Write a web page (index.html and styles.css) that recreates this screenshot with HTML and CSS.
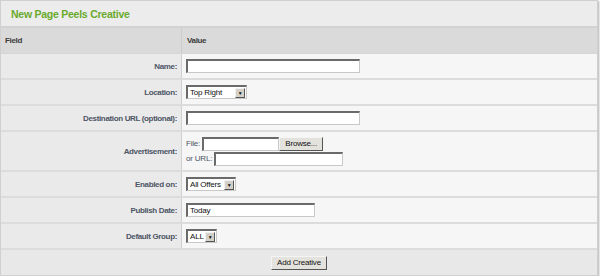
FILE: index.html
```html
<!DOCTYPE html>
<html lang="en">
<head>
    <meta charset="UTF-8">
    <title>New Page Peels Creative</title>
    <link rel="stylesheet" href="styles.css">
</head>
<body>
    <div class="panel">
        <div class="panel-title">New Page Peels Creative</div>
        <table class="form-table">
            <tr class="head">
                <th class="col-field">Field</th>
                <th class="col-value">Value</th>
            </tr>
            <tr>
                <td class="label">Name:</td>
                <td class="value"><input type="text" class="text w-wide"></td>
            </tr>
            <tr>
                <td class="label">Location:</td>
                <td class="value">
                    <span class="select w-loc"><span class="select-text">Top Right</span><span class="arrow">&#9660;</span></span>
                </td>
            </tr>
            <tr>
                <td class="label">Destination URL (optional):</td>
                <td class="value"><input type="text" class="text w-wide"></td>
            </tr>
            <tr class="tall">
                <td class="label">Advertisement:</td>
                <td class="value">
                    <div class="line">File: <input type="text" class="text w-file"><button class="btn btn-browse">Browse...</button></div>
                    <div class="line">or URL: <input type="text" class="text w-url"></div>
                </td>
            </tr>
            <tr>
                <td class="label">Enabled on:</td>
                <td class="value">
                    <span class="select w-offers"><span class="select-text">All Offers</span><span class="arrow">&#9660;</span></span>
                </td>
            </tr>
            <tr>
                <td class="label">Publish Date:</td>
                <td class="value"><input type="text" class="text w-date" value="Today"></td>
            </tr>
            <tr>
                <td class="label">Default Group:</td>
                <td class="value">
                    <span class="select w-all"><span class="select-text">ALL</span><span class="arrow">&#9660;</span></span>
                </td>
            </tr>
            <tr class="foot">
                <td colspan="2"><button class="btn">Add Creative</button></td>
            </tr>
        </table>
    </div>
</body>
</html>
```

FILE: styles.css
```css
body {
    margin: 0;
    background-color: white;
    font-family: 'Liberation Sans', Arial, sans-serif;
    font-size: 8px;
    letter-spacing: -0.2px;
}
.panel {
    width: 596px;
    border: 1px solid #d0d0d0;
    box-shadow: 1px 1px 2px #b0b0b0;
    background-color: #ececec;
}
.panel-title {
    height: 25px;
    line-height: 26px;
    padding-left: 10px;
    font-size: 10.5px;
    letter-spacing: -0.25px;
    font-weight: bold;
    color: #6aaa2c;
    border-bottom: 2px solid #d2d2d2;
}
.form-table {
    width: 100%;
    border-collapse: collapse;
}
.form-table td, .form-table th {
    padding: 0;
}
.head th {
    background-color: #dadada;
    height: 25px;
    text-align: left;
    font-weight: bold;
    letter-spacing: -0.35px;
    color: #3a3a3a;
    border-bottom: 1px solid #d6d6d6;
}
.col-field {
    width: 176px;
    padding-left: 4px !important;
}
.col-value {
    padding-left: 5px !important;
    border-left: 1px solid #cdcdcd;
}
.form-table tr td {
    height: 24px;
    border-bottom: 2px solid #dcdcdc;
}
.form-table tr.tall td {
    height: 38px;
}
.label {
    background-color: #eaeaea;
    text-align: right;
    font-weight: bold;
    letter-spacing: -0.35px;
    color: #4d5566;
    padding-right: 4px !important;
}
.value {
    background-color: #f6f6f6;
    border-left: 1px solid #d0d0d0;
    padding-left: 4px !important;
    color: #4d5566;
}
.text {
    box-sizing: border-box;
    height: 14px;
    border: 1px solid #c8c8c8;
    border-top: 2px solid #6a6a6a;
    border-left: 2px solid #6a6a6a;
    background: white;
    font-family: inherit;
    font-size: 8px;
    letter-spacing: -0.2px;
    color: #111;
    padding: 0 2px;
    vertical-align: middle;
    margin: 0;
}
.w-wide { width: 174px; }
.w-file { width: 77px; }
.w-url { width: 129px; }
.w-date { width: 129px; }
.line {
    height: 15px;
    line-height: 15px;
    white-space: nowrap;
}
.select {
    display: inline-flex;
    align-items: center;
    box-sizing: border-box;
    height: 14px;
    border: 1px solid #c8c8c8;
    border-top: 2px solid #6a6a6a;
    border-left: 2px solid #6a6a6a;
    background: white;
    vertical-align: middle;
    color: #111;
    white-space: nowrap;
}
.select-text {
    flex: 1;
    padding-left: 2px;
}
.arrow {
    width: 10px;
    height: 10px;
    box-sizing: border-box;
    background: #d4d0c8;
    border: 1px solid;
    border-color: #f0f0f0 #555 #555 #f0f0f0;
    font-size: 5px;
    line-height: 8px;
    text-align: center;
    color: #111;
    margin-right: 1px;
}
.w-loc { width: 61px; }
.w-offers { width: 50px; }
.w-all { width: 31px; }
.btn {
    box-sizing: border-box;
    height: 14px;
    padding: 0 5px;
    font-family: inherit;
    font-size: 8px;
    letter-spacing: -0.2px;
    color: #111;
    background: #e4e2dc;
    border: 1px solid;
    border-color: #f4f4f4 #555 #555 #f4f4f4;
    vertical-align: middle;
    margin: 0;
}
.btn-browse {
    width: 44px;
}
.foot td {
    background-color: #e8e8e8;
    text-align: center;
    height: 25px !important;
    border-bottom: none !important;
}
```
